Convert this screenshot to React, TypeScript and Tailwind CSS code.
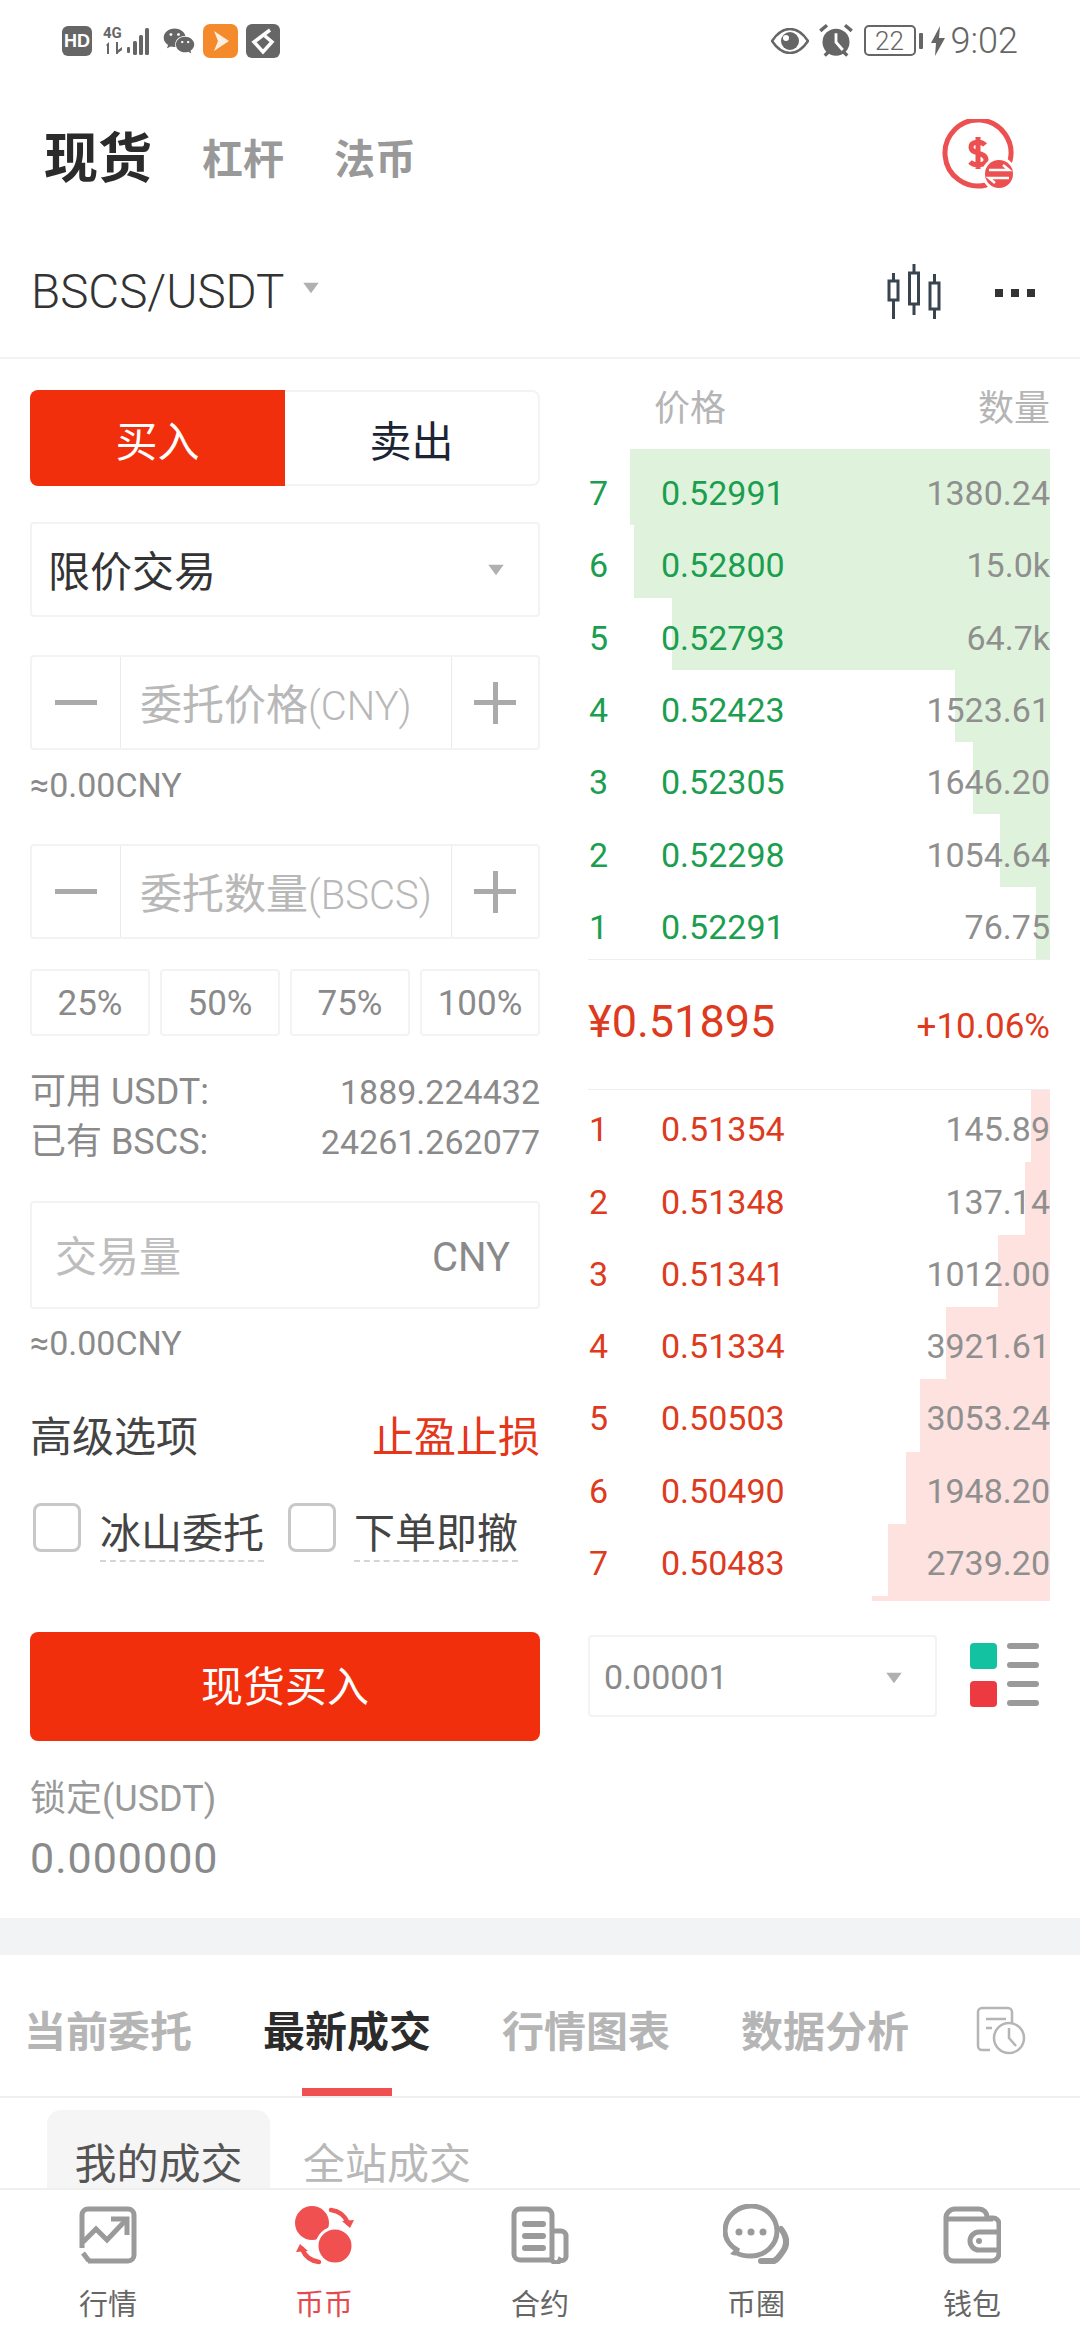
import { FaWeixin } from "react-icons/fa";

const asks = [
  { n: 7, price: "0.52991", qty: "1380.24", w: 420 },
  { n: 6, price: "0.52800", qty: "15.0k", w: 416 },
  { n: 5, price: "0.52793", qty: "64.7k", w: 378 },
  { n: 4, price: "0.52423", qty: "1523.61", w: 95 },
  { n: 3, price: "0.52305", qty: "1646.20", w: 77 },
  { n: 2, price: "0.52298", qty: "1054.64", w: 50 },
  { n: 1, price: "0.52291", qty: "76.75", w: 14 },
];

const bids = [
  { n: 1, price: "0.51354", qty: "145.89", w: 19 },
  { n: 2, price: "0.51348", qty: "137.14", w: 25 },
  { n: 3, price: "0.51341", qty: "1012.00", w: 52 },
  { n: 4, price: "0.51334", qty: "3921.61", w: 104 },
  { n: 5, price: "0.50503", qty: "3053.24", w: 130 },
  { n: 6, price: "0.50490", qty: "1948.20", w: 144 },
  { n: 7, price: "0.50483", qty: "2739.20", w: 162 },
];

const font = "font-['Roboto','Noto_Sans_CJK_SC',sans-serif]";

function Caret({ className }: { className: string }) {
  return (
    <svg viewBox="0 0 20 14" className={className}>
      <path d="M1 1h18l-9 12z" fill="#b0b0b0" />
    </svg>
  );
}

function StatusBar() {
  return (
    <div className="h-[80px] flex items-center justify-between pl-[62px] pr-[62px] pt-[1px]">
      <div className="flex items-center">
        <span className="w-[30px] h-[30px] rounded-[6px] bg-[#666] text-white text-[18px] leading-[30px] font-bold text-center font-['Liberation_Sans',sans-serif]">HD</span>
        <svg viewBox="0 0 50 32" className="w-[50px] h-[32px] ml-[11px]" fill="#666">
          <rect x="24" y="22" width="3" height="6" rx="1" />
          <rect x="30" y="16" width="4" height="14" rx="1.5" />
          <rect x="36" y="10" width="4" height="20" rx="1.5" />
          <rect x="42" y="3" width="4" height="27" rx="1.5" />
          <path d="M3 20l3-3v12H4v-8zM13 17h2v8l4-3v3l-4 3v1h-2z" />
          <text x="0" y="13" fontSize="15" fontWeight="700" fontFamily="Roboto">4G</text>
        </svg>
        <FaWeixin className="w-[32px] h-[32px] ml-[10px] text-[#666]" />
        <svg viewBox="0 0 35 34" className="w-[35px] h-[34px] ml-[8px]">
          <rect width="35" height="34" rx="7" fill="#f58a2c" />
          <path d="M11 7l15 10-15 10 4-10z" fill="#fff" opacity="0.85" />
        </svg>
        <svg viewBox="0 0 34 34" className="w-[34px] h-[34px] ml-[8px]">
          <rect width="34" height="34" rx="6" fill="#666" />
          <path d="M24 6L8 18l9 10 9-10-7-6" fill="none" stroke="#fff" strokeWidth="3.5" />
        </svg>
      </div>
      <div className="flex items-center text-[#666]">
        <svg viewBox="0 0 38 26" className="w-[38px] h-[26px]">
          <path d="M1 13C7 4 13 1 19 1s12 3 18 12c-6 9-12 12-18 12S7 22 1 13z" fill="none" stroke="#666" strokeWidth="2.5" />
          <circle cx="19" cy="13" r="9" fill="#666" />
          <circle cx="15" cy="10" r="3" fill="#fff" />
        </svg>
        <svg viewBox="0 0 32 32" className="w-[36px] h-[36px] ml-[9px]">
          <circle cx="16" cy="17" r="12" fill="#666" />
          <path d="M16 9v8l6 7" fill="none" stroke="#fff" strokeWidth="2.5" />
          <path d="M2 7l6-5M30 7l-6-5M6 29l3-3M26 29l-3-3" stroke="#666" strokeWidth="3" />
        </svg>
        <div className="ml-[10px] w-[52px] h-[31px] rounded-[5px] border-2 border-[#666] flex items-center justify-center text-[26px] leading-none font-['Roboto',sans-serif] font-light">22</div>
        <div className="ml-[3px] w-[4px] h-[16px] rounded-[1px] bg-[#666]" />
        <svg viewBox="0 0 14 30" className="w-[14px] h-[30px] ml-[8px]">
          <path d="M9 0L0 17h5l-1 13 10-18H8z" fill="#666" />
        </svg>
        <span className="ml-[6px] text-[36px] leading-none font-light font-['Roboto',sans-serif]">9:02</span>
      </div>
    </div>
  );
}

function Stepper({ label, unit }: { label: string; unit: string }) {
  return (
    <div className="h-[95px] border-2 border-[#f3f3f3] rounded-[4px] flex items-stretch">
      <div className="w-[89px] flex items-center justify-center border-r border-[#ebebeb] shrink-0">
        <div className="w-[42px] h-[5px] bg-[#aaa]" />
      </div>
      <div className="w-[330px] shrink-0 overflow-hidden pl-[19px] pr-[18px] pt-[5px] flex items-center">
        <span className="whitespace-nowrap text-[42px] text-[#b8b8b8] overflow-hidden">{label}<span className="text-[40px] font-light">{unit}</span></span>
      </div>
      <div className="flex-1 flex items-center justify-center border-l border-[#ebebeb] relative">
        <div className="w-[42px] h-[5px] bg-[#aaa]" />
        <div className="absolute w-[5px] h-[42px] bg-[#aaa]" />
      </div>
    </div>
  );
}

function TradeForm() {
  return (
    <div className="w-[510px] flex flex-col">
      <div className="h-[96px] flex">
        <div className="w-[255px] bg-[#f22f0d] rounded-l-[8px] pt-[8px] flex items-center justify-center text-white text-[42px]">买入</div>
        <div className="flex-1 border-2 border-l-0 border-[#f3f3f3] rounded-r-[8px] pt-[8px] flex items-center justify-center text-[#1c2533] text-[42px]">卖出</div>
      </div>
      <div className="mt-[36px] h-[95px] border-2 border-[#f3f3f3] rounded-[4px] flex items-center justify-between pl-[16px] pr-[33px]">
        <span className="text-[42px] pt-[6px] text-[#333]">限价交易</span>
        <Caret className="w-[18px] h-[12px]" />
      </div>
      <div className="mt-[38px]"><Stepper label="委托价格" unit="(CNY)" /></div>
      <div className="mt-[15px] h-[40px] flex items-center text-[34px] text-[#8a8a8a]">≈0.00CNY</div>
      <div className="mt-[39px]"><Stepper label="委托数量" unit="(BSCS)" /></div>
      <div className="mt-[30px] flex justify-between">
        {["25%", "50%", "75%", "100%"].map((p) => (
          <div key={p} className="w-[120px] h-[67px] border-2 border-[#f3f3f3] rounded-[4px] pt-[4px] flex items-center justify-center text-[35px] text-[#8a8a8a]">{p}</div>
        ))}
      </div>
      <div className="mt-[31px] h-[50px] flex items-center justify-between text-[34px] text-[#8a8a8a]">
        <span className="text-[36px]">可用 USDT:</span>
        <span>1889.224432</span>
      </div>
      <div className="h-[50px] flex items-center justify-between text-[34px] text-[#8a8a8a]">
        <span className="text-[36px]">已有 BSCS:</span>
        <span>24261.262077</span>
      </div>
      <div className="mt-[34px] h-[108px] border-2 border-[#f3f3f3] rounded-[4px] pt-[5px] flex items-center justify-between pl-[23px] pr-[28px]">
        <span className="text-[42px] text-[#bdbdbd]">交易量</span>
        <span className="text-[40px] text-[#8a8a8a]">CNY</span>
      </div>
      <div className="mt-[14px] h-[40px] flex items-center text-[34px] text-[#8a8a8a]">≈0.00CNY</div>
      <div className="mt-[47px] h-[54px] flex items-center justify-between text-[42px]">
        <span className="text-[#444]">高级选项</span>
        <span className="text-[#e5361a]">止盈止损</span>
      </div>
      <div className="mt-[39px] flex items-start">
        <div className="ml-[3px] w-[48px] h-[49px] border-[3px] border-[#c8c8c8] rounded-[8px]" />
        <span className="ml-[19px] mt-[5px] text-[41px] leading-[52px] text-[#444] border-b-2 border-dashed border-[#d5d5d5]">冰山委托</span>
        <div className="ml-[24px] w-[48px] h-[49px] border-[3px] border-[#c8c8c8] rounded-[8px]" />
        <span className="ml-[18px] mt-[5px] text-[41px] leading-[52px] text-[#444] border-b-2 border-dashed border-[#d5d5d5]">下单即撤</span>
      </div>
      <div className="mt-[70px] h-[109px] rounded-[8px] bg-[#f22f0d] pt-[2px] flex items-center justify-center text-[42px] text-white">现货买入</div>
      <div className="mt-[38px] text-[36px] leading-[40px] text-[#999]">锁定(USDT)</div>
      <div className="mt-[14px] text-[43px] leading-[50px] tracking-[1px] text-[#8a8a8a]">0.000000</div>
    </div>
  );
}

function BookRow({ n, price, qty, w, side, first }: { n: number; price: string; qty: string; w: number; side: "ask" | "bid"; first?: boolean }) {
  const ask = side === "ask";
  return (
    <div className={`relative h-[72.3px] flex items-center text-[34px] ${ask ? "pt-[9px]" : "pt-[7px]"}`}>
      <div className={`absolute right-0 bottom-0 ${first ? "-top-[4px]" : "top-0"} ${ask ? "bg-[#dff3dc]" : "bg-[#fde2df]"}`} style={{ width: w }} />
      <span className={`relative w-[73px] pl-[1px] ${ask ? "text-[#1b9e4f]" : "text-[#dd3a20]"}`}>{n}</span>
      <span className={`relative ${ask ? "text-[#1b9e4f]" : "text-[#dd3a20]"}`}>{price}</span>
      <span className="relative ml-auto text-[#8f8f8f]">{qty}</span>
    </div>
  );
}

function OrderBook() {
  return (
    <div className="ml-[48px] w-[462px] flex flex-col">
      <div className="h-[59px] flex justify-between items-start pl-[66px] pt-[1px] text-[36px] leading-[36px] text-[#b5b5b5]">
        <span>价格</span>
        <span>数量</span>
      </div>
      <div className="pt-[4px] border-b border-[#eeeeee]">
        {asks.map((r, i) => <BookRow key={r.n} {...r} side="ask" first={i === 0} />)}
      </div>
      <div className="h-[130px] flex items-center justify-between pb-[6px] border-b border-[#eeeeee]">
        <span className="text-[45px] text-[#dd3a20]">¥0.51895</span>
        <span className="text-[35px] text-[#dd3a20] pt-[12px]">+10.06%</span>
      </div>
      <div>
        {bids.map((r) => <BookRow key={r.n} {...r} side="bid" />)}
      </div>
      <div className="self-end w-[178px] h-[5px] bg-[#fde2df]" />
      <div className="mt-[34px] flex items-center justify-between">
        <div className="w-[349px] h-[82px] border-2 border-[#f3f3f3] rounded-[4px] pt-[3px] flex items-center justify-between pl-[14px] pr-[32px] text-[34px] text-[#8a8a8a]">
          <span>0.00001</span>
          <Caret className="w-[18px] h-[12px]" />
        </div>
        <svg viewBox="0 0 70 70" className="w-[70px] h-[70px] mr-[10px]">
          <rect x="0" y="2" width="27" height="26" rx="4" fill="#12c2a0" />
          <rect x="0" y="40" width="27" height="26" rx="4" fill="#ec3a40" />
          <rect x="37" y="2" width="32" height="6" rx="3" fill="#9a9a9a" />
          <rect x="37" y="21" width="32" height="6" rx="3" fill="#9a9a9a" />
          <rect x="37" y="40" width="32" height="6" rx="3" fill="#9a9a9a" />
          <rect x="37" y="59" width="32" height="6" rx="3" fill="#9a9a9a" />
        </svg>
      </div>
    </div>
  );
}

const navIcons = [
  <svg key="a" viewBox="0 0 58 58" className="w-[58px] h-[58px]" fill="none" stroke="#9a9a9a">
    <path d="M3 42V9a6 6 0 0 1 6-6h40a6 6 0 0 1 6 6v40a6 6 0 0 1-6 6H9" strokeWidth="5" />
    <path d="M4 47l6 8" strokeWidth="5" />
    <path d="M4 36l13-13 11 11 18-19" strokeWidth="5" />
    <path d="M32 13h16v16" strokeWidth="5" />
  </svg>,
  <svg key="b" viewBox="0 0 60 60" className="w-[60px] h-[60px]" fill="#f05050">
    <circle cx="18" cy="18" r="17" />
    <circle cx="41" cy="41" r="18" stroke="#fff" strokeWidth="3" />
    <path d="M37 5c8 1 14 6 17 13" fill="none" stroke="#f05050" strokeWidth="4.5" strokeLinecap="round" />
    <path d="M48 16l12-1-4 8z" />
    <path d="M25 57c-8-1-14-6-17-13" fill="none" stroke="#f05050" strokeWidth="4.5" strokeLinecap="round" />
    <path d="M14 46L2 47l4-8z" />
  </svg>,
  <svg key="c" viewBox="0 0 58 58" className="w-[58px] h-[58px]" fill="none" stroke="#9a9a9a" strokeWidth="5">
    <path d="M41 54H9a6 6 0 0 1-6-6V9a6 6 0 0 1 6-6h26a6 6 0 0 1 6 6v42a4 4 0 0 0 8 3 4 4 0 0 0 6-3V29a5 5 0 0 0-5-4h-9" />
    <path d="M14 18h18M14 30h18M14 42h18" strokeWidth="6" strokeLinecap="round" />
  </svg>,
  <svg key="d" viewBox="0 0 66 62" className="w-[66px] h-[62px]" fill="none" stroke="#9a9a9a" strokeWidth="5">
    <path d="M16 47C6 42 2 34 2 27 2 13 14 2 28 2s26 11 26 25-12 25-26 25c-6 0-11-1-14-3-2 0-4 0-5-1" />
    <path d="M58 25c7 9 7 17 0 25-2 3-5 6-7 7H38" strokeLinecap="round" strokeWidth="6" />
    <circle cx="16" cy="28" r="3.5" fill="#9a9a9a" stroke="none" />
    <circle cx="28" cy="28" r="3.5" fill="#9a9a9a" stroke="none" />
    <circle cx="40" cy="28" r="3.5" fill="#9a9a9a" stroke="none" />
  </svg>,
  <svg key="e" viewBox="0 0 58 58" className="w-[58px] h-[58px]" fill="none" stroke="#9a9a9a" strokeWidth="5">
    <path d="M3 13a9 9 0 0 1 9-10h24a8 8 0 0 1 8 8v1h6a6 6 0 0 1 6 6v30a8 8 0 0 1-8 7H11a8 8 0 0 1-8-7z" />
    <path d="M3 13h47" />
    <path d="M55 26H36a9 9 0 0 0 0 18h19" />
    <circle cx="36" cy="35" r="3" fill="#9a9a9a" stroke="none" />
  </svg>,
];

const navLabels = ["行情", "币币", "合约", "币圈", "钱包"];

export default function App() {
  return (
    <div className={`w-[1080px] h-[2340px] bg-white overflow-hidden flex flex-col ${font}`}>
      <StatusBar />
      <div className="h-[154px] shrink-0 flex items-center justify-between pl-[44px] pr-[62px]">
        <div className="flex items-center pt-[6px]">
          <span className="text-[54px] font-bold text-[#2b2b2b] leading-none">现货</span>
          <span className="ml-[50px] text-[41px] font-bold text-[#999] leading-none">杠杆</span>
          <span className="ml-[50px] text-[41px] font-bold text-[#999] leading-none">法币</span>
        </div>
        <svg viewBox="0 0 76 76" className="w-[76px] h-[76px]">
          <path d="M68 42A33 33 0 1 0 44 66" fill="none" stroke="#ec5050" strokeWidth="5" strokeLinecap="round" />
          <path d="M43 26c-3-4-14-4-14 2 0 8 15 4 15 13 0 6-12 6-16 2M36 18v32" fill="none" stroke="#ec5050" strokeWidth="5" />
          <circle cx="57" cy="55" r="17" fill="#fff" />
          <circle cx="57" cy="55" r="14" fill="#ec5050" />
          <path d="M47 51h20l-6-5M67 59H47l6 5" fill="none" stroke="#fff" strokeWidth="2.5" />
        </svg>
      </div>
      <div className="h-[125px] shrink-0 flex items-center justify-between pl-[31px] pr-[45px] pb-[6px] border-b-2 border-[#f2f2f2]">
        <div className="flex items-center">
          <span className="text-[47.5px] font-light leading-none text-[#333]">BSCS/USDT</span>
          <Caret className="w-[18px] h-[12px] ml-[18px] mb-[9px]" />
        </div>
        <div className="flex items-center">
          <svg viewBox="0 0 58 58" className="w-[58px] h-[58px]" fill="none" stroke="#3a4350" strokeWidth="3">
            <rect x="4" y="17" width="9" height="19" />
            <path d="M8.5 9v8M8.5 36v19" />
            <rect x="24.5" y="9" width="9" height="31" />
            <path d="M29 0v9M29 40v11" />
            <rect x="45" y="19" width="9" height="26" />
            <path d="M49.5 10v9M49.5 45v10" />
          </svg>
          <div className="ml-[52px] flex gap-[8px]">
            <div className="w-[8px] h-[8px] bg-[#333]" />
            <div className="w-[8px] h-[8px] bg-[#333]" />
            <div className="w-[8px] h-[8px] bg-[#333]" />
          </div>
        </div>
      </div>
      <div className="h-[1559px] shrink-0 flex pl-[30px] pr-[30px] pt-[31px]">
        <TradeForm />
        <OrderBook />
      </div>
      <div className="h-[37px] shrink-0 bg-[#f2f3f5]" />
      <div className="h-[143px] shrink-0 border-b-2 border-[#f0f0f0] flex items-center pl-[24px] pt-[14px] gap-[71px] text-[42px] font-bold text-[#b5b5b5] relative">
        <span>当前委托</span>
        <span className="text-[#2b2b2b]">最新成交</span>
        <span>行情图表</span>
        <span>数据分析</span>
        <svg viewBox="0 0 50 50" className="w-[50px] h-[50px] -ml-[4px] -mt-[4px]" fill="none" stroke="#b5b5b5" strokeWidth="2.5">
          <path d="M14 44H6a4 4 0 0 1-4-4V6a4 4 0 0 1 4-4h26a4 4 0 0 1 4 4v12" />
          <path d="M10 13h20M10 22h6" />
          <circle cx="33" cy="32" r="15" />
          <path d="M33 22v10l7 8" />
        </svg>
        <div className="absolute left-[302px] bottom-0 w-[90px] h-[8px] bg-[#f05050]" />
      </div>
      <div className="h-[90px] shrink-0 flex items-end pl-[47px]">
        <div className="w-[223px] h-[78px] bg-[#f5f5f5] rounded-t-[14px] flex items-start justify-center pt-[27px] text-[42px] leading-[56px] text-[#555]">我的成交</div>
        <div className="ml-[33px] h-[78px] pt-[27px] text-[42px] leading-[56px] text-[#b8b8b8]">全站成交</div>
      </div>
      <div className="flex-1 border-t-2 border-[#f0f0f0] grid grid-cols-5 bg-white">
        {navLabels.map((label, i) => (
          <div key={label} className="flex flex-col items-center">
            <div className="h-[60px] mt-[15px] flex items-center">{navIcons[i]}</div>
            <span className={`mt-[20px] text-[29px] leading-[40px] ${i === 1 ? "text-[#e5484d]" : "text-[#666]"}`}>{label}</span>
          </div>
        ))}
      </div>
    </div>
  );
}
